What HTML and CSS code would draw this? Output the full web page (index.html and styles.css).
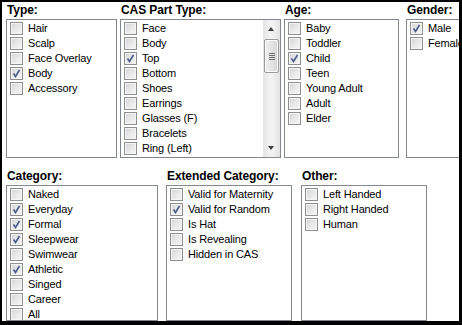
FILE: index.html
```html
<!DOCTYPE html>
<html>
<head>
  <title>CAS Part Flags</title>
  <meta charset="UTF-8">
  <link rel="stylesheet" href="styles.css">
</head>
<body>
  <div id="panel">
    <div class="row row-top">
      <div class="group group-type">
        <div class="group-label">Type:</div>
        <div class="list">
          <div class="items">
            <label class="item"><span class="check"></span>Hair</label>
            <label class="item"><span class="check"></span>Scalp</label>
            <label class="item"><span class="check"></span>Face Overlay</label>
            <label class="item"><span class="check checked"><svg viewBox="0 0 11 11"><path d="M2.5 5.5 L4.5 8.5 L8.5 2"/></svg></span>Body</label>
            <label class="item"><span class="check"></span>Accessory</label>
          </div>
        </div>
      </div>

      <div class="group group-cas">
        <div class="group-label">CAS Part Type:</div>
        <div class="list list-scroll">
          <div class="items">
            <label class="item"><span class="check"></span>Face</label>
            <label class="item"><span class="check"></span>Body</label>
            <label class="item"><span class="check checked"><svg viewBox="0 0 11 11"><path d="M2.5 5.5 L4.5 8.5 L8.5 2"/></svg></span>Top</label>
            <label class="item"><span class="check"></span>Bottom</label>
            <label class="item"><span class="check"></span>Shoes</label>
            <label class="item"><span class="check"></span>Earrings</label>
            <label class="item"><span class="check"></span>Glasses (F)</label>
            <label class="item"><span class="check"></span>Bracelets</label>
            <label class="item"><span class="check"></span>Ring (Left)</label>
          </div>
          <div class="scrollbar">
            <div class="arrow arrow-up"></div>
            <div class="track">
              <div class="thumb"><span class="grip"></span></div>
            </div>
            <div class="arrow arrow-down"></div>
          </div>
        </div>
      </div>

      <div class="group group-age">
        <div class="group-label">Age:</div>
        <div class="list">
          <div class="items">
            <label class="item"><span class="check"></span>Baby</label>
            <label class="item"><span class="check"></span>Toddler</label>
            <label class="item"><span class="check checked"><svg viewBox="0 0 11 11"><path d="M2.5 5.5 L4.5 8.5 L8.5 2"/></svg></span>Child</label>
            <label class="item"><span class="check"></span>Teen</label>
            <label class="item"><span class="check"></span>Young Adult</label>
            <label class="item"><span class="check"></span>Adult</label>
            <label class="item"><span class="check"></span>Elder</label>
          </div>
        </div>
      </div>

      <div class="group group-gender">
        <div class="group-label">Gender:</div>
        <div class="list">
          <div class="items">
            <label class="item"><span class="check checked"><svg viewBox="0 0 11 11"><path d="M2.5 5.5 L4.5 8.5 L8.5 2"/></svg></span>Male</label>
            <label class="item"><span class="check"></span>Female</label>
          </div>
        </div>
      </div>
    </div>

    <div class="row row-bottom">
      <div class="group group-category">
        <div class="group-label">Category:</div>
        <div class="list">
          <div class="items">
            <label class="item"><span class="check"></span>Naked</label>
            <label class="item"><span class="check checked"><svg viewBox="0 0 11 11"><path d="M2.5 5.5 L4.5 8.5 L8.5 2"/></svg></span>Everyday</label>
            <label class="item"><span class="check checked"><svg viewBox="0 0 11 11"><path d="M2.5 5.5 L4.5 8.5 L8.5 2"/></svg></span>Formal</label>
            <label class="item"><span class="check checked"><svg viewBox="0 0 11 11"><path d="M2.5 5.5 L4.5 8.5 L8.5 2"/></svg></span>Sleepwear</label>
            <label class="item"><span class="check"></span>Swimwear</label>
            <label class="item"><span class="check checked"><svg viewBox="0 0 11 11"><path d="M2.5 5.5 L4.5 8.5 L8.5 2"/></svg></span>Athletic</label>
            <label class="item"><span class="check"></span>Singed</label>
            <label class="item"><span class="check"></span>Career</label>
            <label class="item"><span class="check"></span>All</label>
          </div>
        </div>
      </div>

      <div class="group group-extended">
        <div class="group-label">Extended Category:</div>
        <div class="list">
          <div class="items">
            <label class="item"><span class="check"></span>Valid for Maternity</label>
            <label class="item"><span class="check checked"><svg viewBox="0 0 11 11"><path d="M2.5 5.5 L4.5 8.5 L8.5 2"/></svg></span>Valid for Random</label>
            <label class="item"><span class="check"></span>Is Hat</label>
            <label class="item"><span class="check"></span>Is Revealing</label>
            <label class="item"><span class="check"></span>Hidden in CAS</label>
          </div>
        </div>
      </div>

      <div class="group group-other">
        <div class="group-label">Other:</div>
        <div class="list">
          <div class="items">
            <label class="item"><span class="check"></span>Left Handed</label>
            <label class="item"><span class="check"></span>Right Handed</label>
            <label class="item"><span class="check"></span>Human</label>
          </div>
        </div>
      </div>
    </div>
  </div>
</body>
</html>
```

FILE: styles.css
```css
* {
  box-sizing: border-box;
}

html, body {
  margin: 0;
  padding: 0;
  height: 100%;
}

body {
  background: #000000;
  padding: 2px 3px 4px 2px;
  font-family: "Liberation Sans", Arial, sans-serif;
  font-size: 11px;
  color: #000000;
  overflow: hidden;
}

#panel {
  background: #ffffff;
  height: 100%;
  overflow: hidden;
  padding: 1px 0 0 4px;
  display: flex;
  flex-direction: column;
}

.row {
  display: flex;
  align-items: stretch;
}

.row-top {
  gap: 3px;
  height: 155px;
  flex-shrink: 0;
}

.row-bottom {
  gap: 8px;
  margin-top: 11px;
  flex: 1;
  min-height: 0;
}

.group {
  display: flex;
  flex-direction: column;
  flex-shrink: 0;
}

.group-label {
  font-size: 12px;
  font-weight: 700;
  line-height: 14px;
  height: 14px;
  margin: 0 0 2px 1px;
  white-space: nowrap;
  letter-spacing: -0.1px;
}

.group-type { width: 111px; }
.group-cas { width: 161px; }
.group-age { width: 115px; }
.group-gender { width: 80px; margin-left: 4px; }

.group-category { width: 152px; }
.group-extended { width: 126px; }
.group-other { width: 126px; margin-left: 1px; }

.list {
  flex: 1;
  border: 1px solid #828790;
  background: #ffffff;
  overflow: hidden;
  display: flex;
  min-height: 0;
}

.items {
  flex: 1;
  padding: 1px 0 0 2px;
  overflow: hidden;
}

.item {
  display: flex;
  align-items: center;
  height: 15px;
  white-space: nowrap;
  line-height: 15px;
  letter-spacing: -0.15px;
}

.check {
  width: 13px;
  height: 13px;
  margin: 0 5px 0 1px;
  flex-shrink: 0;
  border: 1px solid #8e8f8f;
  background: linear-gradient(135deg, #d4d4d4 0%, #e8e8e8 50%, #f7f7f7 100%);
  box-shadow: inset 0 0 0 1px #f4f4f4;
  display: flex;
  align-items: center;
  justify-content: center;
}

.check svg {
  width: 11px;
  height: 11px;
}

.check svg path {
  fill: none;
  stroke: #4a5b8c;
  stroke-width: 1.6;
}

/* Scrollbar */
.scrollbar {
  width: 17px;
  flex-shrink: 0;
  display: flex;
  flex-direction: column;
  background: linear-gradient(90deg, #e3e3e3, #f2f2f2 40%, #f2f2f2 60%, #e3e3e3);
}

.arrow {
  height: 17px;
  position: relative;
  flex-shrink: 0;
}

.arrow::after {
  content: '';
  position: absolute;
  left: 5px;
  width: 0;
  height: 0;
  border-left: 3.5px solid transparent;
  border-right: 3.5px solid transparent;
}

.arrow-up::after {
  top: 7px;
  border-bottom: 4px solid #404040;
}

.arrow-down::after {
  top: 6px;
  border-top: 4px solid #404040;
}

.track {
  flex: 1;
  padding-top: 2px;
}

.thumb {
  margin: 0 1px;
  height: 34px;
  border: 1px solid #9a9a9a;
  border-radius: 2px;
  background: linear-gradient(90deg, #f0f0f0, #e4e4e4 50%, #d6d6d6);
  box-shadow: inset 0 0 0 1px #fafafa;
  display: flex;
  align-items: center;
  justify-content: center;
}

.grip {
  width: 6px;
  height: 7px;
  background: repeating-linear-gradient(180deg, #6e6e6e 0, #6e6e6e 1px, transparent 1px, transparent 2px);
}
```
